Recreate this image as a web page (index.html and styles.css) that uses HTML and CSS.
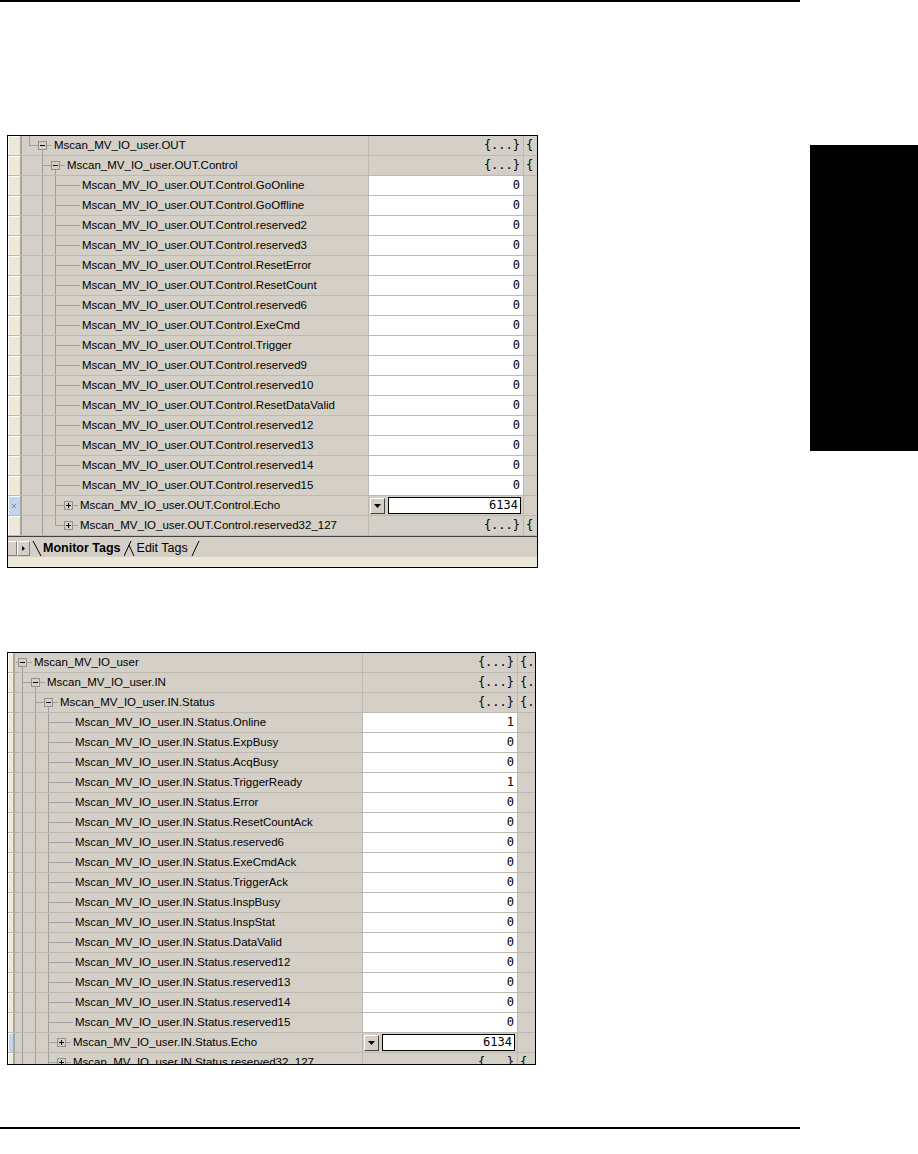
FILE: index.html
```html
<!DOCTYPE html>
<html lang="en">
<head>
  <meta charset="UTF-8">
  <title>Mscan_MV_IO_user - Tag Monitor</title>
  <link rel="stylesheet" href="styles.css">
</head>
<body>

  <div class="rule"></div>

  <div class="page">
    <div class="col">

      <!-- Output tags -->
      <div class="grid t1">
        <div class="row"><div class="rh"></div><div class="name"><i class="tc l"></i><i class="tc bx open"><b class="box minus"></b></i><i class="stub"></i>Mscan_MV_IO_user.OUT</div><div class="val">{...}</div><div class="tail">{</div></div>
        <div class="row"><div class="rh"></div><div class="name"><i class="tc e"></i><i class="tc t"></i><i class="tc bx open"><b class="box minus"></b></i><i class="stub"></i>Mscan_MV_IO_user.OUT.Control</div><div class="val">{...}</div><div class="tail">{</div></div>
        <div class="row"><div class="rh"></div><div class="name"><i class="tc e"></i><i class="tc v"></i><i class="tc t"></i><i class="tc h"></i><i class="stub long"></i>Mscan_MV_IO_user.OUT.Control.GoOnline</div><div class="val on">0</div><div class="tail"></div></div>
        <div class="row"><div class="rh"></div><div class="name"><i class="tc e"></i><i class="tc v"></i><i class="tc t"></i><i class="tc h"></i><i class="stub long"></i>Mscan_MV_IO_user.OUT.Control.GoOffline</div><div class="val on">0</div><div class="tail"></div></div>
        <div class="row"><div class="rh"></div><div class="name"><i class="tc e"></i><i class="tc v"></i><i class="tc t"></i><i class="tc h"></i><i class="stub long"></i>Mscan_MV_IO_user.OUT.Control.reserved2</div><div class="val on">0</div><div class="tail"></div></div>
        <div class="row"><div class="rh"></div><div class="name"><i class="tc e"></i><i class="tc v"></i><i class="tc t"></i><i class="tc h"></i><i class="stub long"></i>Mscan_MV_IO_user.OUT.Control.reserved3</div><div class="val on">0</div><div class="tail"></div></div>
        <div class="row"><div class="rh"></div><div class="name"><i class="tc e"></i><i class="tc v"></i><i class="tc t"></i><i class="tc h"></i><i class="stub long"></i>Mscan_MV_IO_user.OUT.Control.ResetError</div><div class="val on">0</div><div class="tail"></div></div>
        <div class="row"><div class="rh"></div><div class="name"><i class="tc e"></i><i class="tc v"></i><i class="tc t"></i><i class="tc h"></i><i class="stub long"></i>Mscan_MV_IO_user.OUT.Control.ResetCount</div><div class="val on">0</div><div class="tail"></div></div>
        <div class="row"><div class="rh"></div><div class="name"><i class="tc e"></i><i class="tc v"></i><i class="tc t"></i><i class="tc h"></i><i class="stub long"></i>Mscan_MV_IO_user.OUT.Control.reserved6</div><div class="val on">0</div><div class="tail"></div></div>
        <div class="row"><div class="rh"></div><div class="name"><i class="tc e"></i><i class="tc v"></i><i class="tc t"></i><i class="tc h"></i><i class="stub long"></i>Mscan_MV_IO_user.OUT.Control.ExeCmd</div><div class="val on">0</div><div class="tail"></div></div>
        <div class="row"><div class="rh"></div><div class="name"><i class="tc e"></i><i class="tc v"></i><i class="tc t"></i><i class="tc h"></i><i class="stub long"></i>Mscan_MV_IO_user.OUT.Control.Trigger</div><div class="val on">0</div><div class="tail"></div></div>
        <div class="row"><div class="rh"></div><div class="name"><i class="tc e"></i><i class="tc v"></i><i class="tc t"></i><i class="tc h"></i><i class="stub long"></i>Mscan_MV_IO_user.OUT.Control.reserved9</div><div class="val on">0</div><div class="tail"></div></div>
        <div class="row"><div class="rh"></div><div class="name"><i class="tc e"></i><i class="tc v"></i><i class="tc t"></i><i class="tc h"></i><i class="stub long"></i>Mscan_MV_IO_user.OUT.Control.reserved10</div><div class="val on">0</div><div class="tail"></div></div>
        <div class="row"><div class="rh"></div><div class="name"><i class="tc e"></i><i class="tc v"></i><i class="tc t"></i><i class="tc h"></i><i class="stub long"></i>Mscan_MV_IO_user.OUT.Control.ResetDataValid</div><div class="val on">0</div><div class="tail"></div></div>
        <div class="row"><div class="rh"></div><div class="name"><i class="tc e"></i><i class="tc v"></i><i class="tc t"></i><i class="tc h"></i><i class="stub long"></i>Mscan_MV_IO_user.OUT.Control.reserved12</div><div class="val on">0</div><div class="tail"></div></div>
        <div class="row"><div class="rh"></div><div class="name"><i class="tc e"></i><i class="tc v"></i><i class="tc t"></i><i class="tc h"></i><i class="stub long"></i>Mscan_MV_IO_user.OUT.Control.reserved13</div><div class="val on">0</div><div class="tail"></div></div>
        <div class="row"><div class="rh"></div><div class="name"><i class="tc e"></i><i class="tc v"></i><i class="tc t"></i><i class="tc h"></i><i class="stub long"></i>Mscan_MV_IO_user.OUT.Control.reserved14</div><div class="val on">0</div><div class="tail"></div></div>
        <div class="row"><div class="rh"></div><div class="name"><i class="tc e"></i><i class="tc v"></i><i class="tc t"></i><i class="tc h"></i><i class="stub long"></i>Mscan_MV_IO_user.OUT.Control.reserved15</div><div class="val on">0</div><div class="tail"></div></div>
        <div class="row"><div class="rh sel"><svg width="4" height="4" viewBox="0 0 4 4"><path d="M0 0l4 4M4 0L0 4" stroke="#777" stroke-width="0.8"/></svg></div><div class="name"><i class="tc e"></i><i class="tc v"></i><i class="tc t"></i><i class="tc bx"><b class="box plus"></b></i><i class="stub"></i>Mscan_MV_IO_user.OUT.Control.Echo</div><div class="val edit"><span class="dd"><svg width="7" height="4" viewBox="0 0 7 4"><path d="M0 0h7L3.5 4z"/></svg></span><span class="field">6134</span></div><div class="tail"></div></div>
        <div class="row"><div class="rh"></div><div class="name"><i class="tc e"></i><i class="tc v"></i><i class="tc l"></i><i class="tc bx"><b class="box plus"></b></i><i class="stub"></i>Mscan_MV_IO_user.OUT.Control.reserved32_127</div><div class="val">{...}</div><div class="tail">{</div></div>

        <div class="tabbar">
          <span class="sbtn cut"></span>
          <span class="sbtn"><svg width="3" height="5" viewBox="0 0 3 5"><path d="M0 0l3 2.5L0 5z"/></svg></span>
          <svg class="edge" width="10" height="15" viewBox="0 0 10 15"><path d="M1 0L9 15" stroke="#000" fill="none"/></svg>
          <span class="tab active">Monitor Tags</span>
          <svg class="edge" width="12" height="15" viewBox="0 0 12 15"><path d="M0 15L7 0M5 4L10 15" stroke="#000" fill="none"/></svg>
          <span class="tab">Edit Tags</span>
          <svg class="edge" width="9" height="15" viewBox="0 0 9 15"><path d="M1 15L8 0" stroke="#000" fill="none"/></svg>
        </div>
        <div class="strip"></div>
      </div>

      <!-- Input tags -->
      <div class="grid t2">
        <div class="row"><div class="rh"></div><div class="name"><i class="tc bx open"><b class="box minus"></b></i><i class="stub"></i>Mscan_MV_IO_user</div><div class="val">{...}</div><div class="tail">{.</div></div>
        <div class="row"><div class="rh"></div><div class="name"><i class="tc t"></i><i class="tc bx open"><b class="box minus"></b></i><i class="stub"></i>Mscan_MV_IO_user.IN</div><div class="val">{...}</div><div class="tail">{.</div></div>
        <div class="row"><div class="rh"></div><div class="name"><i class="tc v"></i><i class="tc t"></i><i class="tc bx open"><b class="box minus"></b></i><i class="stub"></i>Mscan_MV_IO_user.IN.Status</div><div class="val">{...}</div><div class="tail">{.</div></div>
        <div class="row"><div class="rh"></div><div class="name"><i class="tc v"></i><i class="tc v"></i><i class="tc t"></i><i class="tc h"></i><i class="stub long"></i>Mscan_MV_IO_user.IN.Status.Online</div><div class="val on">1</div><div class="tail"></div></div>
        <div class="row"><div class="rh"></div><div class="name"><i class="tc v"></i><i class="tc v"></i><i class="tc t"></i><i class="tc h"></i><i class="stub long"></i>Mscan_MV_IO_user.IN.Status.ExpBusy</div><div class="val on">0</div><div class="tail"></div></div>
        <div class="row"><div class="rh"></div><div class="name"><i class="tc v"></i><i class="tc v"></i><i class="tc t"></i><i class="tc h"></i><i class="stub long"></i>Mscan_MV_IO_user.IN.Status.AcqBusy</div><div class="val on">0</div><div class="tail"></div></div>
        <div class="row"><div class="rh"></div><div class="name"><i class="tc v"></i><i class="tc v"></i><i class="tc t"></i><i class="tc h"></i><i class="stub long"></i>Mscan_MV_IO_user.IN.Status.TriggerReady</div><div class="val on">1</div><div class="tail"></div></div>
        <div class="row"><div class="rh"></div><div class="name"><i class="tc v"></i><i class="tc v"></i><i class="tc t"></i><i class="tc h"></i><i class="stub long"></i>Mscan_MV_IO_user.IN.Status.Error</div><div class="val on">0</div><div class="tail"></div></div>
        <div class="row"><div class="rh"></div><div class="name"><i class="tc v"></i><i class="tc v"></i><i class="tc t"></i><i class="tc h"></i><i class="stub long"></i>Mscan_MV_IO_user.IN.Status.ResetCountAck</div><div class="val on">0</div><div class="tail"></div></div>
        <div class="row"><div class="rh"></div><div class="name"><i class="tc v"></i><i class="tc v"></i><i class="tc t"></i><i class="tc h"></i><i class="stub long"></i>Mscan_MV_IO_user.IN.Status.reserved6</div><div class="val on">0</div><div class="tail"></div></div>
        <div class="row"><div class="rh"></div><div class="name"><i class="tc v"></i><i class="tc v"></i><i class="tc t"></i><i class="tc h"></i><i class="stub long"></i>Mscan_MV_IO_user.IN.Status.ExeCmdAck</div><div class="val on">0</div><div class="tail"></div></div>
        <div class="row"><div class="rh"></div><div class="name"><i class="tc v"></i><i class="tc v"></i><i class="tc t"></i><i class="tc h"></i><i class="stub long"></i>Mscan_MV_IO_user.IN.Status.TriggerAck</div><div class="val on">0</div><div class="tail"></div></div>
        <div class="row"><div class="rh"></div><div class="name"><i class="tc v"></i><i class="tc v"></i><i class="tc t"></i><i class="tc h"></i><i class="stub long"></i>Mscan_MV_IO_user.IN.Status.InspBusy</div><div class="val on">0</div><div class="tail"></div></div>
        <div class="row"><div class="rh"></div><div class="name"><i class="tc v"></i><i class="tc v"></i><i class="tc t"></i><i class="tc h"></i><i class="stub long"></i>Mscan_MV_IO_user.IN.Status.InspStat</div><div class="val on">0</div><div class="tail"></div></div>
        <div class="row"><div class="rh"></div><div class="name"><i class="tc v"></i><i class="tc v"></i><i class="tc t"></i><i class="tc h"></i><i class="stub long"></i>Mscan_MV_IO_user.IN.Status.DataValid</div><div class="val on">0</div><div class="tail"></div></div>
        <div class="row"><div class="rh"></div><div class="name"><i class="tc v"></i><i class="tc v"></i><i class="tc t"></i><i class="tc h"></i><i class="stub long"></i>Mscan_MV_IO_user.IN.Status.reserved12</div><div class="val on">0</div><div class="tail"></div></div>
        <div class="row"><div class="rh"></div><div class="name"><i class="tc v"></i><i class="tc v"></i><i class="tc t"></i><i class="tc h"></i><i class="stub long"></i>Mscan_MV_IO_user.IN.Status.reserved13</div><div class="val on">0</div><div class="tail"></div></div>
        <div class="row"><div class="rh"></div><div class="name"><i class="tc v"></i><i class="tc v"></i><i class="tc t"></i><i class="tc h"></i><i class="stub long"></i>Mscan_MV_IO_user.IN.Status.reserved14</div><div class="val on">0</div><div class="tail"></div></div>
        <div class="row"><div class="rh"></div><div class="name"><i class="tc v"></i><i class="tc v"></i><i class="tc t"></i><i class="tc h"></i><i class="stub long"></i>Mscan_MV_IO_user.IN.Status.reserved15</div><div class="val on">0</div><div class="tail"></div></div>
        <div class="row"><div class="rh sel"></div><div class="name"><i class="tc v"></i><i class="tc v"></i><i class="tc t"></i><i class="tc bx"><b class="box plus"></b></i><i class="stub"></i>Mscan_MV_IO_user.IN.Status.Echo</div><div class="val edit"><span class="dd"><svg width="7" height="4" viewBox="0 0 7 4"><path d="M0 0h7L3.5 4z"/></svg></span><span class="field">6134</span></div><div class="tail"></div></div>
        <div class="row"><div class="rh"></div><div class="name"><i class="tc v"></i><i class="tc v"></i><i class="tc t"></i><i class="tc bx"><b class="box plus"></b></i><i class="stub"></i>Mscan_MV_IO_user.IN.Status.reserved32_127</div><div class="val">{...}</div><div class="tail">{.</div></div>
      </div>

    </div>

    <div class="edge-tab"></div>
  </div>

  <div class="rule rule-bottom"></div>

</body>
</html>
```

FILE: styles.css
```css
:root {
  --gray: #d4d0c8;
  --head: #ece9d8;
  --grid: #bdb9ae;
  --tree: #a0a0a0;
}

body {
  margin: 0;
  background: #fff;
  color: #000;
  font-family: "Liberation Sans", Arial, sans-serif;
}

.rule {
  width: 800px;
  height: 2px;
  background: #000;
}

.rule-bottom {
  margin-top: 62px;
}

.page {
  display: flex;
  align-items: flex-start;
}

.col {
  width: 800px;
  flex: none;
}

.edge-tab {
  width: 108px;
  height: 306px;
  margin: 143px 0 0 10px;
  background: #000;
}

/* tag grid */
.grid {
  margin-left: 7px;
  border: 1px solid #000;
  background: var(--gray);
  box-sizing: border-box;
  overflow: hidden;
}

.t1 {
  width: 531px;
  height: 433px;
  margin-top: 133px;
}

.t2 {
  width: 529px;
  height: 413px;
  margin-top: 84px;
}

.row {
  display: flex;
  height: 20px;
  border-bottom: 1px solid var(--grid);
  box-sizing: border-box;
  font-size: 11.5px;
  line-height: 19px;
}

.rh {
  flex: none;
  display: flex;
  align-items: center;
  justify-content: center;
  background: var(--head);
  border-right: 1px solid #aca899;
  box-shadow: inset 1px 1px #fff;
  box-sizing: border-box;
}

.t1 .rh { width: 13px; }
.t2 .rh { width: 6px; }

.rh.sel {
  background: #c4d3ee;
}

.name {
  flex: none;
  display: flex;
  align-items: center;
  padding-left: 1px;
  border-left: 1px solid #a8a496;
  border-right: 1px solid var(--grid);
  box-sizing: border-box;
  white-space: nowrap;
  overflow: hidden;
}

.t1 .name { width: 348px; }
.t2 .name { width: 349px; }

/* tree lines */
.tc {
  flex: none;
  width: 13px;
  align-self: stretch;
  background-repeat: no-repeat;
}

.tc.v {
  background-image: linear-gradient(var(--tree), var(--tree));
  background-size: 1px 100%;
  background-position: 6px 0;
}

.tc.t {
  background-image: linear-gradient(var(--tree), var(--tree)), linear-gradient(var(--tree), var(--tree));
  background-size: 1px 100%, 7px 1px;
  background-position: 6px 0, 6px 9px;
}

.tc.l {
  background-image: linear-gradient(var(--tree), var(--tree)), linear-gradient(var(--tree), var(--tree));
  background-size: 1px 10px, 7px 1px;
  background-position: 6px 0, 6px 9px;
}

.tc.h {
  background-image: linear-gradient(var(--tree), var(--tree));
  background-size: 100% 1px;
  background-position: 0 9px;
}

.tc.bx {
  display: flex;
  align-items: center;
  justify-content: center;
  background-image: linear-gradient(var(--tree), var(--tree));
  background-size: 100% 1px;
  background-position: 0 9px;
}

.tc.bx.open {
  background-image: linear-gradient(var(--tree), var(--tree)), linear-gradient(var(--tree), var(--tree));
  background-size: 100% 1px, 1px 10px;
  background-position: 0 9px, 6px 100%;
}

.box {
  width: 9px;
  height: 9px;
  margin-top: -1px;
  box-sizing: border-box;
  border: 1px solid #919191;
  background-color: var(--gray);
  background-repeat: no-repeat;
}

.box.minus {
  background-image: linear-gradient(#000, #000);
  background-size: 5px 1px;
  background-position: 1px 3px;
}

.box.plus {
  background-image: linear-gradient(#000, #000), linear-gradient(#000, #000);
  background-size: 5px 1px, 1px 5px;
  background-position: 1px 3px, 3px 1px;
}

.stub {
  flex: none;
  width: 3px;
  height: 1px;
  margin: -1px 2px 0 0;
  background: var(--tree);
}

.stub.long {
  width: 5px;
}

/* value columns */
.val {
  flex: none;
  width: 155px;
  padding-right: 3px;
  border-right: 1px solid var(--grid);
  box-sizing: border-box;
  text-align: right;
  font-family: "DejaVu Sans Mono", monospace;
  font-size: 12px;
  white-space: nowrap;
  overflow: hidden;
}

.val.on {
  background: #fff;
}

.val.edit {
  display: flex;
  align-items: center;
  padding: 0 2px 0 1px;
}

.dd {
  flex: none;
  display: flex;
  align-items: center;
  justify-content: center;
  width: 15px;
  height: 16px;
  box-sizing: border-box;
  border: 1px solid;
  border-color: #fff #404040 #404040 #fff;
  background: var(--gray);
}

.field {
  flex: 1;
  height: 17px;
  margin-left: 3px;
  padding-right: 2px;
  box-sizing: border-box;
  border: 1px solid #000;
  background: #fff;
  line-height: 15px;
  text-align: right;
}

.tail {
  flex: 1;
  padding-left: 2px;
  font-family: "DejaVu Sans Mono", monospace;
  font-size: 12px;
  white-space: nowrap;
  overflow: hidden;
}

/* sheet tabs */
.tabbar {
  display: flex;
  align-items: flex-end;
  height: 21px;
  padding-bottom: 1px;
  border-top: 1px solid #404040;
  box-sizing: border-box;
}

.sbtn {
  flex: none;
  display: flex;
  align-items: center;
  justify-content: center;
  width: 13px;
  height: 15px;
  box-sizing: border-box;
  border: 1px solid;
  border-color: #fff #808080 #808080 #fff;
  background: var(--gray);
}

.sbtn.cut {
  width: 9px;
  border-left: none;
}

.edge {
  flex: none;
  display: block;
  margin-left: 2px;
}

.tab {
  font-size: 12.5px;
  line-height: 15px;
  padding: 0 1px;
}

.tab.active {
  font-weight: bold;
}

.strip {
  height: 10px;
  background: var(--head);
}
```
